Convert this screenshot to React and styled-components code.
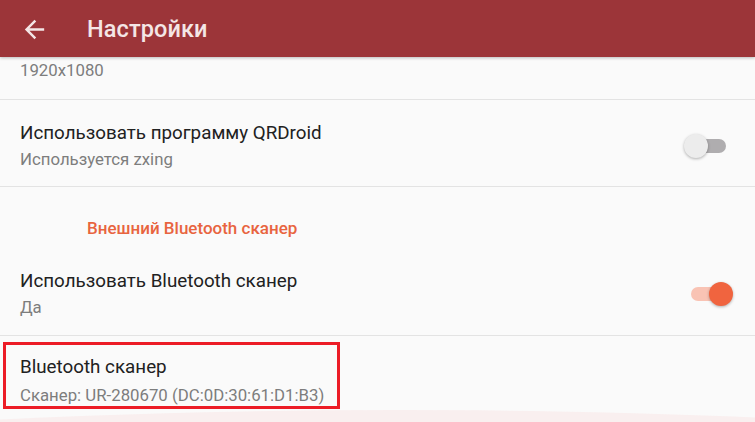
import React from "react";
import styled, { createGlobalStyle } from "styled-components";

const Global = createGlobalStyle`
  html, body { margin: 0; padding: 0; background: #fafafa; }
  body { font-family: Roboto, "Noto Sans", "Liberation Sans", sans-serif; overflow: hidden; }
  * { box-sizing: border-box; }
`;

const Screen = styled.div`
  position: relative;
  width: 755px;
  height: 422px;
  overflow: hidden;
  background: #fafafa;
  display: flex;
  flex-direction: column;
`;

const AppBar = styled.header`
  position: relative;
  z-index: 2;
  height: 57px;
  flex: none;
  background: #9c3539;
  display: flex;
  align-items: center;
  padding-left: 20px;
  box-shadow: 0 1px 3px rgba(0, 0, 0, 0.25);
`;

const BackButton = styled.div`
  width: 29px;
  height: 29px;
  display: flex;
  align-items: center;
  justify-content: center;
  margin-top: 1px;
  color: #f4e6e6;
`;

const Title = styled.h1`
  margin: 0 0 0 38px;
  font-size: 23.5px;
  font-weight: 500;
  color: #f4e6e6;
  letter-spacing: 0.1px;
`;

const List = styled.div`
  display: flex;
  flex-direction: column;
`;

const Row = styled.div`
  display: flex;
  align-items: center;
  padding: ${(p) => p.$pad || "21px 20px 16px"};
  border-bottom: ${(p) => (p.$divider ? "1px solid #e3e3e3" : "none")};
`;

const TextBlock = styled.div`
  flex: 1;
  display: flex;
  flex-direction: column;
`;

const RowTitle = styled.div`
  font-size: 18.8px;
  line-height: 24px;
  color: #212121;
`;

const RowSummary = styled.div`
  font-size: 16.8px;
  line-height: 22px;
  margin-top: ${(p) => p.$gap ?? 3}px;
  color: #7d7d7d;
`;

const Category = styled.div`
  padding: 31px 20px 10px 87px;
  font-size: 17px;
  line-height: 20px;
  font-weight: 500;
  color: #e8643f;
`;

const SwitchBox = styled.div`
  position: relative;
  width: 46px;
  height: 24px;
  flex: none;
  margin-right: ${(p) => (p.$on ? "0px" : "5px")};
`;

const Track = styled.div`
  position: absolute;
  left: 4px;
  top: 5px;
  width: 38px;
  height: 14px;
  border-radius: 7px;
  background: ${(p) => (p.$on ? "#f9c3b4" : "#afadaf")};
`;

const Thumb = styled.div`
  position: absolute;
  top: 0;
  left: ${(p) => (p.$on ? "22px" : "0px")};
  width: 24px;
  height: 24px;
  border-radius: 50%;
  background: ${(p) => (p.$on ? "#f0643f" : "#ececec")};
  box-shadow: 0 1px 3px rgba(0, 0, 0, 0.3);
`;

const Highlight = styled.div`
  position: absolute;
  left: 3px;
  top: 342px;
  width: 337px;
  height: 67px;
  border: 3px solid #ec1c26;
  pointer-events: none;
  z-index: 3;
`;

const Ripple = styled.div`
  position: absolute;
  left: -1200px;
  top: 410px;
  width: 3200px;
  height: 600px;
  border-radius: 50%;
  background: rgba(240, 120, 120, 0.08);
  pointer-events: none;
`;

function Switch({ on }) {
  return (
    <SwitchBox $on={on}>
      <Track $on={on} />
      <Thumb $on={on} />
    </SwitchBox>
  );
}

function ArrowBack() {
  return (
    <svg width="29" height="29" viewBox="0 0 24 24" fill="currentColor">
      <path d="M20 11H7.83l5.59-5.59L12 4l-8 8 8 8 1.41-1.41L7.83 13H20v-2z" />
    </svg>
  );
}

export default function App() {
  return (
    <Screen>
      <Global />
      <AppBar>
        <BackButton>
          <ArrowBack />
        </BackButton>
        <Title>Настройки</Title>
      </AppBar>
      <List>
        <Row $divider $pad="2px 20px 18px">
          <TextBlock>
            <RowSummary $gap={0}>1920x1080</RowSummary>
          </TextBlock>
        </Row>
        <Row $divider>
          <TextBlock>
            <RowTitle>Использовать программу QRDroid</RowTitle>
            <RowSummary>Используется zxing</RowSummary>
          </TextBlock>
          <Switch on={false} />
        </Row>
        <Category>Внешний Bluetooth сканер</Category>
        <Row $divider $pad="21px 22px 17px 20px">
          <TextBlock>
            <RowTitle>Использовать Bluetooth сканер</RowTitle>
            <RowSummary>Да</RowSummary>
          </TextBlock>
          <Switch on />
        </Row>
        <Row $pad="19px 20px 10px">
          <TextBlock>
            <RowTitle>Bluetooth сканер</RowTitle>
            <RowSummary $gap={5}>Сканер: UR-280670 (DC:0D:30:61:D1:B3)</RowSummary>
          </TextBlock>
        </Row>
      </List>
      <Ripple />
      <Highlight />
    </Screen>
  );
}
